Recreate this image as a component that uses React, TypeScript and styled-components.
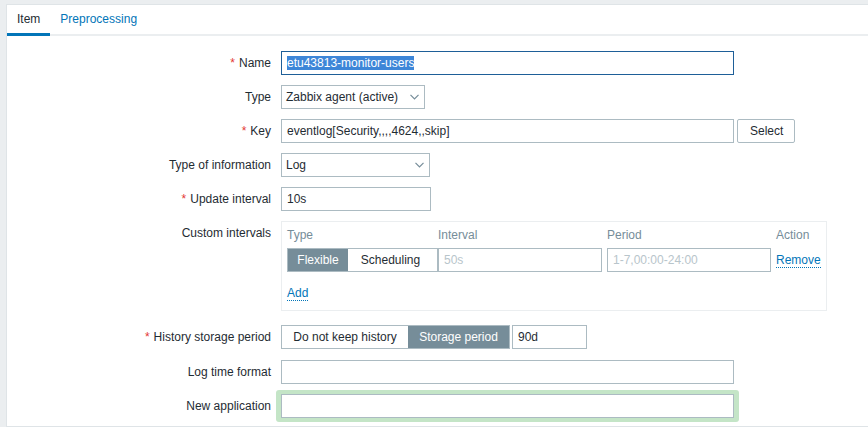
import styled, { createGlobalStyle } from 'styled-components';

const GlobalStyle = createGlobalStyle`
  html, body {
    margin: 0;
    padding: 0;
    background: #ebeef0;
    font-family: "Liberation Sans", Arial, sans-serif;
    font-size: 12px;
    color: #1f2c33;
    overflow: hidden;
  }
`;

const Page = styled.div`
  padding: 4px 0 0 6px;
  height: 427px;
  box-sizing: border-box;
`;

const Panel = styled.div`
  background: #fff;
  border: 1px solid #dfe4e7;
  border-right: none;
  height: 100%;
  box-sizing: border-box;
`;

const TabBar = styled.ul`
  display: flex;
  margin: 0;
  padding: 0;
  list-style: none;
  border-bottom: 2px solid #ebeef0;
`;

const Tab = styled.li<{ $active?: boolean }>`
  padding: 7px 10px 7px 10px;
  line-height: 14px;
  margin-bottom: -2px;
  border-bottom: 3px solid ${p => (p.$active ? '#0275b8' : 'transparent')};
  color: ${p => (p.$active ? '#1f2c33' : '#0275b8')};
  cursor: pointer;
`;

const Form = styled.div`
  display: grid;
  grid-template-columns: 264px 1fr;
  column-gap: 10px;
  row-gap: 10px;
  padding-top: 15px;
`;

const Label = styled.div`
  text-align: right;
  line-height: 24px;
  white-space: nowrap;
`;

const Req = styled.span`
  color: #e33734;
  margin-right: 4px;
`;

const Field = styled.div`
  display: flex;
  align-items: center;
  gap: 3px;
`;

const Input = styled.div<{ $w: number; $focus?: boolean; $placeholder?: boolean }>`
  width: ${p => p.$w}px;
  height: 24px;
  box-sizing: border-box;
  border: 1px solid ${p => (p.$focus ? '#1e5f98' : '#acbbc2')};
  padding: 0 5px;
  line-height: 22px;
  color: ${p => (p.$placeholder ? '#b8c5cb' : '#1f2c33')};
  background: #fff;
  white-space: nowrap;
  overflow: hidden;
`;

const Selected = styled.span`
  background: #3d86d8;
  color: #fff;
`;

const Select = styled.div<{ $w: number }>`
  width: ${p => p.$w}px;
  height: 24px;
  box-sizing: border-box;
  border: 1px solid #acbbc2;
  padding: 0 0 0 4px;
  display: flex;
  align-items: center;
  justify-content: space-between;
  background: #fff;
`;

const Chevron = styled.svg`
  width: 9px;
  height: 6px;
  margin-right: 5px;
`;

const Button = styled.div`
  height: 24px;
  box-sizing: border-box;
  border: 1px solid #acbbc2;
  border-radius: 2px;
  padding: 0 11px 0 12px;
  line-height: 22px;
  background: #fff;
`;

const Segmented = styled.div`
  display: flex;
  border: 1px solid #acbbc2;
  height: 24px;
  box-sizing: border-box;
`;

const Segment = styled.div<{ $active?: boolean; $w: number }>`
  width: ${p => p.$w}px;
  text-align: center;
  line-height: 22px;
  background: ${p => (p.$active ? '#768d99' : '#fff')};
  color: ${p => (p.$active ? '#fff' : '#1f2c33')};
`;

const IntervalBox = styled.div`
  width: 546px;
  height: 90px;
  box-sizing: border-box;
  border: 1px solid #ebeef0;
  padding: 5px 5px 0 5px;
`;

const IntervalGrid = styled.div`
  display: grid;
  grid-template-columns: 151px 169px 169px auto;
  row-gap: 5px;
  align-items: center;
`;

const HeadCell = styled.div`
  color: #768d99;
  line-height: 16px;
`;

const Link = styled.span`
  color: #0275b8;
  border-bottom: 1px dotted #0275b8;
  line-height: 14px;
  cursor: pointer;
`;

const AddRow = styled.div`
  padding-top: 14px;
`;

const Glow = styled.div`
  padding: 4px 5px;
  margin: -4px 0 0 -5px;
  background: #c4e5c7;
  border-radius: 3px;
  width: fit-content;
`;

const SpacedRow = styled.div`
  margin-top: 4px;
`;

const ChevronIcon = () => (
  <Chevron viewBox="0 0 9 6">
    <path d="M0.5 0.8 L4.5 4.8 L8.5 0.8" fill="none" stroke="#768d99" strokeWidth="1.2" />
  </Chevron>
);

export default function App() {
  return (
    <>
      <GlobalStyle />
      <Page>
        <Panel>
          <TabBar>
            <Tab $active>Item</Tab>
            <Tab>Preprocessing</Tab>
          </TabBar>
          <Form>
            <Label><Req>*</Req>Name</Label>
            <Field>
              <Input $w={453} $focus><Selected>etu43813-monitor-users</Selected></Input>
            </Field>

            <Label>Type</Label>
            <Field>
              <Select $w={144}>Zabbix agent (active)<ChevronIcon /></Select>
            </Field>

            <Label><Req>*</Req>Key</Label>
            <Field>
              <Input $w={453}>eventlog[Security,,,,4624,,skip]</Input>
              <Button>Select</Button>
            </Field>

            <Label>Type of information</Label>
            <Field>
              <Select $w={149}>Log<ChevronIcon /></Select>
            </Field>

            <Label><Req>*</Req>Update interval</Label>
            <Field>
              <Input $w={150}>10s</Input>
            </Field>

            <Label>Custom intervals</Label>
            <div>
              <IntervalBox>
                <IntervalGrid>
                  <HeadCell>Type</HeadCell>
                  <HeadCell>Interval</HeadCell>
                  <HeadCell>Period</HeadCell>
                  <HeadCell>Action</HeadCell>
                  <Segmented>
                    <Segment $active $w={60}>Flexible</Segment>
                    <Segment $w={85}>Scheduling</Segment>
                  </Segmented>
                  <Input $w={164} $placeholder>50s</Input>
                  <Input $w={164} $placeholder>1-7,00:00-24:00</Input>
                  <div><Link>Remove</Link></div>
                </IntervalGrid>
                <AddRow><Link>Add</Link></AddRow>
              </IntervalBox>
            </div>

            <SpacedRow as={Label}><Req>*</Req>History storage period</SpacedRow>
            <SpacedRow>
              <Field>
                <Segmented>
                  <Segment $w={126}>Do not keep history</Segment>
                  <Segment $active $w={101}>Storage period</Segment>
                </Segmented>
                <Input $w={75} style={{ marginLeft: -1 }}>90d</Input>
              </Field>
            </SpacedRow>

            <SpacedRow as={Label} style={{ marginTop: 1 }}>Log time format</SpacedRow>
            <SpacedRow as={Field} style={{ marginTop: 1 }}>
              <Input $w={453} />
            </SpacedRow>

            <Label>New application</Label>
            <Field>
              <Glow>
                <Input $w={453} />
              </Glow>
            </Field>
          </Form>
        </Panel>
      </Page>
    </>
  );
}
